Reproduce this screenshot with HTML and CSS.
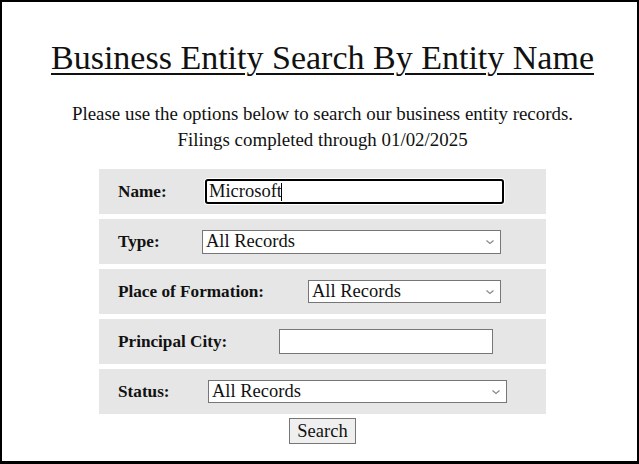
FILE: index.html
```html
<!DOCTYPE html>
<html lang="en">
<head>
<meta charset="utf-8">
<title>Business Entity Search By Entity Name</title>
<link rel="stylesheet" href="styles.css">
</head>
<body>
<div class="frame">
  <h1 class="title">Business Entity Search By Entity Name</h1>
  <p class="intro">Please use the options below to search our business entity records.<br>Filings completed through 01/02/2025</p>
  <form class="search">
    <div class="row">
      <label class="label label-name" for="name">Name:</label>
      <span class="focus-wrap">
        <input class="field field-name" id="name" type="text" value="Microsoft">
        <span class="caret"></span>
      </span>
    </div>
    <div class="row">
      <label class="label label-type" for="type">Type:</label>
      <select class="field select select-type" id="type"><option>All Records</option></select>
    </div>
    <div class="row">
      <label class="label label-place" for="place">Place of Formation:</label>
      <select class="field select select-place" id="place"><option>All Records</option></select>
    </div>
    <div class="row">
      <label class="label label-city" for="city">Principal City:</label>
      <input class="field field-city" id="city" type="text">
    </div>
    <div class="row">
      <label class="label label-status" for="status">Status:</label>
      <select class="field select select-status" id="status"><option>All Records</option></select>
    </div>
    <div class="actions">
      <button class="btn" type="button">Search</button>
    </div>
  </form>
</div>
</body>
</html>
```

FILE: styles.css
```css
html, body {
  margin: 0;
  padding: 0;
  background: #fff;
}
.frame {
  box-sizing: border-box;
  height: 464px;
  border: 2px solid #000;
  border-bottom-width: 3px;
  padding-left: 6px;
  font-family: "Liberation Serif", "Times New Roman", serif;
  color: #111;
  overflow: hidden;
}
.title {
  margin: 36px 0 0;
  text-align: center;
  font-size: 34px;
  font-weight: normal;
  line-height: 40px;
  text-decoration: underline;
  text-decoration-thickness: 2px;
  text-underline-offset: 4px;
}
.intro {
  margin: 23px 0 0;
  text-align: center;
  font-size: 18.9px;
  line-height: 26px;
}
.search {
  margin-top: 16px;
}
.row {
  box-sizing: border-box;
  width: 447px;
  height: 45px;
  margin: 0 auto 5px;
  padding-left: 19px;
  background: #e6e6e6;
  display: flex;
  align-items: center;
}
.label {
  flex-shrink: 0;
  font-weight: bold;
  font-size: 17.2px;
}
.label-name { width: 87px; }
.label-type { width: 84px; }
.label-place { width: 190px; }
.label-city { width: 161px; }
.label-status { width: 90px; }
.field {
  box-sizing: border-box;
  font-family: "Liberation Serif", "Times New Roman", serif;
  font-size: 18.5px;
  color: #111;
  background: #fff;
  border: 1px solid #767676;
  border-radius: 0;
  margin: 0;
}
.select {
  -webkit-appearance: none;
  appearance: none;
  padding: 0 20px 0 3px;
  background: #fff url("data:image/svg+xml;utf8,<svg xmlns='http://www.w3.org/2000/svg' width='10' height='6' viewBox='0 0 10 6'><path d='M1.5 1.5 L5 4.5 L8.5 1.5' fill='none' stroke='%23888' stroke-width='1.2'/></svg>") no-repeat right 5px center;
  line-height: 21px;
}
.focus-wrap {
  position: relative;
  display: inline-flex;
}
.field-name {
  width: 299px;
  height: 25px;
  border: 2px solid #000;
  border-radius: 3px;
  padding: 0 2px;
  outline: none;
  box-shadow: 0 0 0 1px #fff;
}
.caret {
  position: absolute;
  left: 76px;
  top: 4px;
  width: 1px;
  height: 18px;
  background: #000;
}
.select-type {
  width: 299px;
  height: 24px;
}
.select-place {
  width: 193px;
  height: 23px;
}
.field-city {
  width: 214px;
  height: 25px;
  padding: 0 3px;
}
.select-status {
  width: 299px;
  height: 23px;
}
.actions {
  display: flex;
  justify-content: center;
  margin-top: -1px;
}
.btn {
  box-sizing: border-box;
  width: 67px;
  height: 26px;
  padding: 0;
  font-family: "Liberation Serif", "Times New Roman", serif;
  font-size: 18.5px;
  color: #111;
  background: #efefef;
  border: 1px solid #767676;
  border-radius: 0;
}
```
